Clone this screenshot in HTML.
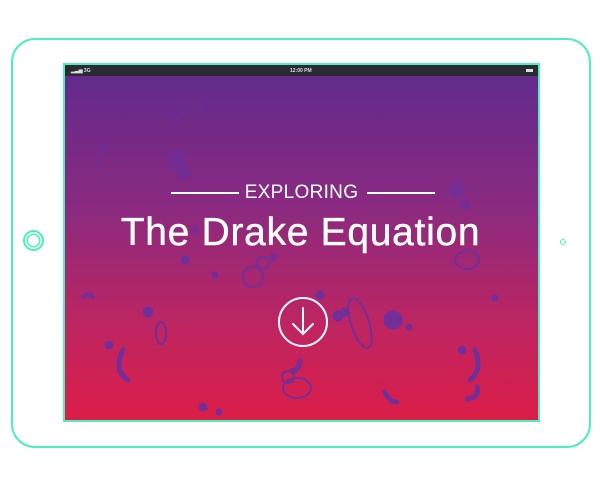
<!DOCTYPE html>
<html><head><style>
html,body{margin:0;padding:0;background:#fff;width:600px;height:487px;overflow:hidden;font-family:"Liberation Sans",sans-serif}
.frame{position:absolute;left:11px;top:38px;width:580px;height:410px;border:2px solid #4cf0bd;border-radius:24px;box-sizing:border-box}
.screen{position:absolute;left:63px;top:63px;width:477px;height:359px;border:2px solid #4cf0bd;box-sizing:border-box;background:linear-gradient(#5f2b8e 0%,#8a2a80 40%,#c02560 75%,#dc1d48 100%);overflow:hidden}
.bar{position:absolute;left:0;top:0;right:0;height:11px;background:#2c2b33;color:#ddd;font-size:5px;font-weight:bold}
.home{position:absolute;left:23px;top:230px;width:21px;height:21px;border:2px solid #4cf0bd;border-radius:50%;box-sizing:border-box;box-shadow:inset 0 0 0 1.5px #fff,inset 0 0 0 3px #4cf0bd}
.cam{position:absolute;left:560px;top:239px;width:6px;height:6px;border:1.5px solid #4cf0bd;border-radius:50%;box-sizing:border-box}
.t1{position:absolute;left:0;right:0;top:117px;text-align:center;color:#fff;font-size:19px;letter-spacing:0.3px}
.t2{position:absolute;left:-2px;right:0;top:146px;text-align:center;color:#fff;font-size:39px;letter-spacing:0.7px;-webkit-text-stroke:0.4px #fff}
.line{position:absolute;top:127px;height:2px;background:#fff;width:68px}
</style></head><body>
<div class="frame"></div>
<div class="home"></div>
<div class="cam"></div>
<div class="screen">
<svg width="476" height="358" style="position:absolute;left:0;top:0" fill="#6a30a0" stroke="#6a30a0">
<g opacity="0.35"><path d="M40 80 q-12 10 -5 20" stroke-width="5" fill="none" stroke-linecap="round"/><circle cx="135" cy="42" r="4"/><circle cx="140" cy="35" r="3"/><path d="M120 45 q-5 8 -12 9" stroke-width="5" fill="none" stroke-linecap="round"/></g>
<g opacity="0.6"><circle cx="112" cy="95" r="8"/><circle cx="118" cy="108" r="6"/><circle cx="130" cy="165" r="4"/><circle cx="208" cy="192" r="4"/><circle cx="248" cy="120" r="4"/><circle cx="392" cy="125" r="8"/><circle cx="400" cy="140" r="5"/><circle cx="188" cy="212" r="10" fill="none" stroke-width="3"/><circle cx="198" cy="198" r="6" fill="none" stroke-width="3"/></g>
<g opacity="0.9"><circle cx="120" cy="195" r="4"/><circle cx="150" cy="210" r="3"/><circle cx="255" cy="230" r="4"/><circle cx="273" cy="251" r="5"/><circle cx="280" cy="247" r="4"/><circle cx="328" cy="255" r="9"/><circle cx="344" cy="262" r="3"/><circle cx="397" cy="285" r="4"/><circle cx="430" cy="233" r="3"/><circle cx="44" cy="280" r="4"/><circle cx="83" cy="247" r="5"/><circle cx="154" cy="347" r="3"/><circle cx="138" cy="342" r="4"/><circle cx="223" cy="312" r="6" fill="none" stroke-width="2"/>
<path d="M410 285 q8 20 -5 30" stroke-width="5" fill="none" stroke-linecap="round"/><path d="M58 285 q-10 20 5 30" stroke-width="5" fill="none" stroke-linecap="round"/><path d="M235 296 q-2 10 -8 10" stroke-width="5" fill="none" stroke-linecap="round"/><path d="M320 327 q4 10 12 10" stroke-width="5" fill="none" stroke-linecap="round"/><path d="M412 322 q3 10 -10 12" stroke-width="5" fill="none" stroke-linecap="round"/><path d="M18 232 q5 -5 10 0" stroke-width="4" fill="none" stroke-linecap="round"/>
<ellipse cx="295" cy="258" rx="9" ry="26" transform="rotate(-18 295 258)" fill="none" stroke-width="2"/><ellipse cx="232" cy="323" rx="14" ry="10" fill="none" stroke-width="2"/><ellipse cx="402" cy="195" rx="12" ry="9" fill="none" stroke-width="2"/><ellipse cx="96" cy="268" rx="5" ry="11" fill="none" stroke-width="2"/></g>
</svg>
<div class="bar"><span style="position:absolute;left:6px;top:3px">▂▃▅ 3G</span><span style="position:absolute;left:225px;top:3px">12:00 PM</span><span style="position:absolute;right:5px;top:4px;width:7px;height:3px;background:#ddd"></span></div>
<div class="line" style="left:106px"></div>
<div class="line" style="left:302px"></div>
<div class="t1">EXPLORING</div>
<div class="t2">The Drake Equation</div>
<svg width="52" height="52" style="position:absolute;left:212px;top:231px" fill="none" stroke="#fff" stroke-width="2" stroke-linecap="round"><circle cx="26" cy="26" r="24"/><path d="M26 12 V38 M16 28 L26 38 L36 28"/></svg>
</div>
</body></html>
